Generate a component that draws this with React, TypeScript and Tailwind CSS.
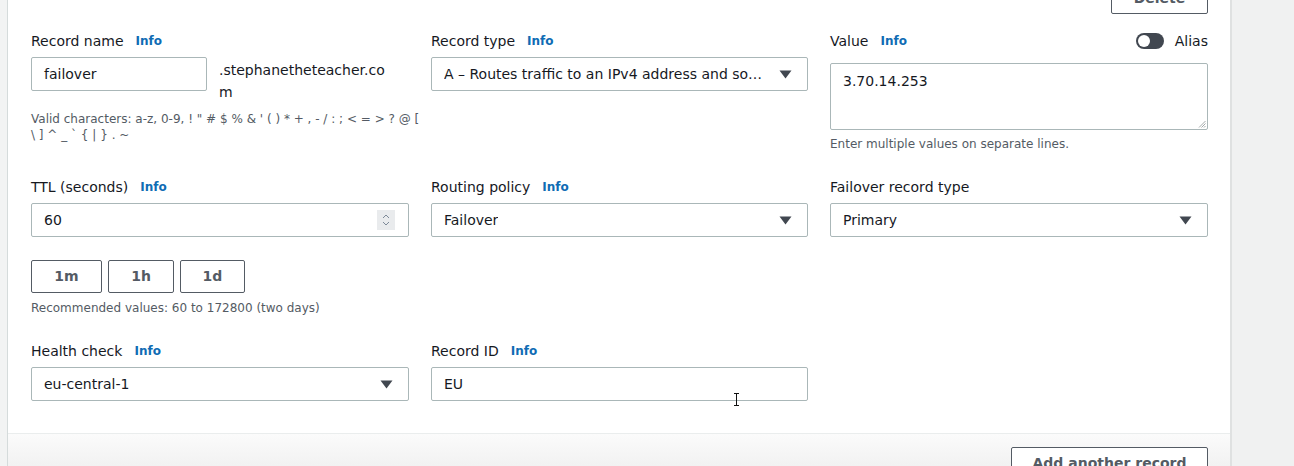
import React from "react";

const font = { fontFamily: '"DejaVu Sans", "Open Sans", Arial, sans-serif' };

function Info() {
  return <span className="ml-[12px] text-[12px] font-bold text-[#0f6cb4]">Info</span>;
}

function Label({ text, info = true }: { text: string; info?: boolean }) {
  return (
    <div className="flex h-[22px] items-center text-[14px] leading-[22px] text-[#16191f]">
      <span>{text}</span>
      {info && <Info />}
    </div>
  );
}

function Caret() {
  return (
    <svg width="13" height="9" viewBox="0 0 13 9" className="shrink-0">
      <path d="M0.5 0.5 H12.5 L6.5 8.5 Z" fill="#414750" />
    </svg>
  );
}

function Select({ value }: { value: string }) {
  return (
    <div className="flex h-[34px] items-center justify-between rounded-[2px] border border-[#aab7b8] bg-white pl-[12px] pr-[15px] text-[14px] text-[#16191f]">
      <span className="truncate">{value}</span>
      <Caret />
    </div>
  );
}

function TextInput({ value, className = "" }: { value: string; className?: string }) {
  return (
    <div className={`flex h-[34px] items-center rounded-[2px] border border-[#aab7b8] bg-white px-[12px] text-[14px] text-[#16191f] ${className}`}>
      {value}
    </div>
  );
}

function Hint({ children, className = "" }: { children: React.ReactNode; className?: string }) {
  return <div className={`text-[12px] leading-[16px] text-[#545b64] ${className}`}>{children}</div>;
}

function Chip({ text, w }: { text: string; w: string }) {
  return (
    <div className={`flex h-[33px] items-center justify-center rounded-[2px] border border-[#545b64] text-[14px] font-bold text-[#545b64] ${w}`}>
      {text}
    </div>
  );
}

export default function App() {
  return (
    <div style={font} className="flex h-[466px] w-[1294px] overflow-hidden bg-[#f2f3f3]">
      <div className="w-[8px] shrink-0 border-r border-[#d5dbdb] bg-[#f2f3f3]" />

      <div className="relative flex w-[1222px] shrink-0 flex-col bg-white">
        {/* top: delete button peeking in */}
        <div className="flex h-[14px] justify-end pr-[22px]">
          <div className="-mt-[18px] flex h-[32px] w-[97px] items-center justify-center rounded-[2px] border border-[#545b64] text-[14px] font-bold text-[#545b64]">
            Delete
          </div>
        </div>

        <div className="grid grid-cols-[378px_377px_378px] gap-x-[22px] gap-y-[24px] pl-[23px] pr-[22px] pt-[16px] pb-[32px]">
          {/* Record name */}
          <div>
            <Label text="Record name" />
            <div className="mt-[5px] flex items-start">
              <TextInput value="failover" className="w-[176px] h-[33px]" />
              <div className="ml-[12px] mt-[2px] w-[172px] break-all text-[14px] leading-[22px] text-[#16191f]">
                .stephanetheteacher.com
              </div>
            </div>
            <Hint className="mt-[8px] whitespace-nowrap">
              Valid characters: a-z, 0-9, ! " # $ % &amp; ' ( ) * + , - / : ; &lt; = &gt; ? @ [
              <br />
              \ ] ^ _ ` {"{"} | {"}"} . ~
            </Hint>
          </div>

          {/* Record type */}
          <div>
            <Label text="Record type" />
            <div className="mt-[5px]">
              <Select value="A – Routes traffic to an IPv4 address and so…" />
            </div>
          </div>

          {/* Value */}
          <div>
            <div className="flex items-start justify-between">
              <Label text="Value" />
              <div className="flex h-[22px] items-center">
                <div className="flex h-[16px] w-[28px] items-center rounded-full bg-[#414750] px-[2px]">
                  <div className="h-[12px] w-[12px] rounded-full bg-white" />
                </div>
                <span className="ml-[11px] text-[14px] text-[#16191f]">Alias</span>
              </div>
            </div>
            <div className="relative mt-[11px] h-[67px] rounded-[2px] border border-[#aab7b8] bg-white px-[12px] pt-[7px] text-[14px] leading-[20px] text-[#16191f]">
              3.70.14.253
              <svg width="8" height="8" viewBox="0 0 8 8" className="absolute bottom-[1px] right-[1px]">
                <path d="M7.5 1 L1 7.5 M7.5 3.5 L3.5 7.5 M7.5 6 L6 7.5" stroke="#8d9496" strokeWidth="0.8" />
              </svg>
            </div>
            <Hint className="mt-[6px]">Enter multiple values on separate lines.</Hint>
          </div>

          {/* TTL */}
          <div>
            <Label text="TTL (seconds)" />
            <div className="mt-[5px] flex h-[34px] items-center justify-between rounded-[2px] border border-[#aab7b8] bg-white pl-[12px] pr-[13px] text-[14px] text-[#16191f]">
              <span>60</span>
              <div className="flex h-[20px] w-[18px] flex-col items-center justify-center bg-[#e9ebed]">
                <svg width="8" height="14" viewBox="0 0 8 14">
                  <path d="M1 5 L4 2 L7 5 M1 9 L4 12 L7 9" stroke="#7d8998" strokeWidth="1" fill="none" />
                </svg>
              </div>
            </div>
            <div className="mt-[23px] flex gap-[6px]">
              <Chip text="1m" w="w-[71px]" />
              <Chip text="1h" w="w-[66px]" />
              <Chip text="1d" w="w-[65px]" />
            </div>
            <Hint className="mt-[7px]">Recommended values: 60 to 172800 (two days)</Hint>
          </div>

          {/* Routing policy */}
          <div>
            <Label text="Routing policy" />
            <div className="mt-[5px]">
              <Select value="Failover" />
            </div>
          </div>

          {/* Failover record type */}
          <div>
            <Label text="Failover record type" info={false} />
            <div className="mt-[5px]">
              <Select value="Primary" />
            </div>
          </div>

          {/* Health check */}
          <div>
            <Label text="Health check" />
            <div className="mt-[5px]">
              <Select value="eu-central-1" />
            </div>
          </div>

          {/* Record ID */}
          <div>
            <Label text="Record ID" />
            <div className="relative mt-[5px]">
              <TextInput value="EU" />
              <svg width="7" height="13" viewBox="0 0 7 13" className="absolute left-[302px] top-[26px]">
                <path d="M1 0.5 H6 M3.5 0.5 V12.5 M1 12.5 H6" stroke="#111" strokeWidth="1" fill="none" />
              </svg>
            </div>
          </div>

          <div />
        </div>

        <div className="flex flex-1 justify-end border-t border-[#eaeded] bg-gradient-to-b from-[#fbfbfb] to-[#eeeeee] pr-[22px] pt-[13px]">
          <div className="flex h-[32px] w-[197px] items-center justify-center rounded-[2px] border border-[#545b64] bg-white text-[14px] font-bold text-[#545b64]">
            Add another record
          </div>
        </div>
      </div>

      <div className="flex-1 border-l-2 border-[#dfe1e1] bg-[#f0f1f1]" />
    </div>
  );
}
